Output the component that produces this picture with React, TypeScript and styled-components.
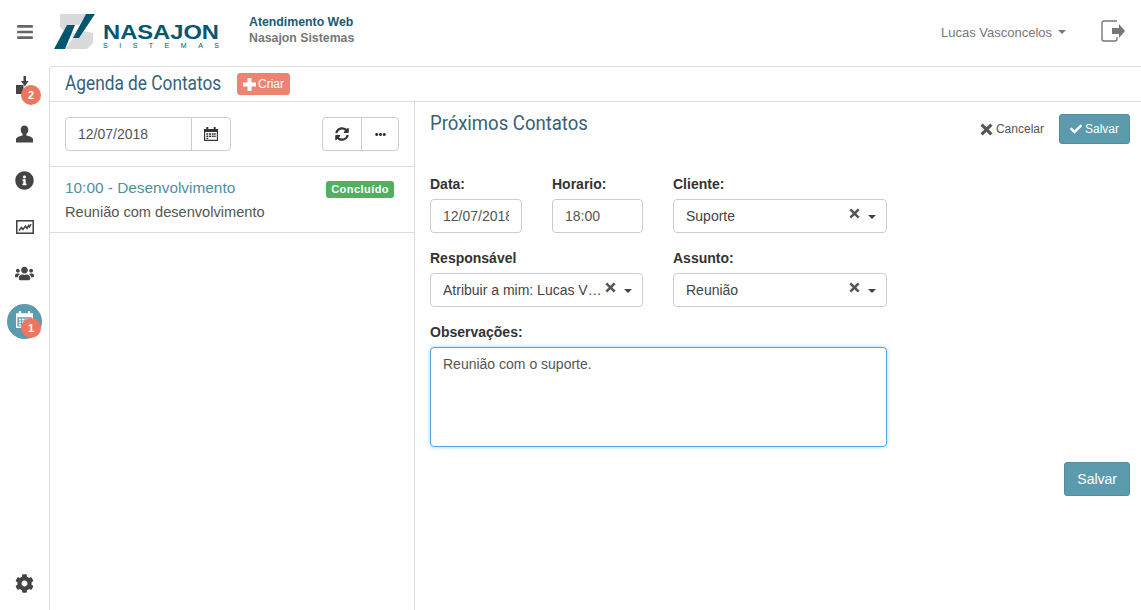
import React from 'react'
import styled, { createGlobalStyle } from 'styled-components'
import { FaBars, FaCheck, FaCog, FaEllipsisH, FaInfoCircle, FaSyncAlt, FaUsers } from 'react-icons/fa'

const GlobalStyle = createGlobalStyle`
  html, body { margin: 0; padding: 0; height: 100%; background: #fff; }
  body { font-family: "Liberation Sans", Arial, sans-serif; font-size: 14px; color: #555; overflow: hidden; }
  * { box-sizing: border-box; }
`

const Page = styled.div`
  width: 1141px;
  height: 610px;
  display: flex;
  flex-direction: column;
`

const TopBar = styled.header`
  height: 66px;
  flex: none;
  display: flex;
  align-items: center;
  padding: 0 15px 0 16px;
`

const MenuButton = styled.div`
  width: 38px;
  display: flex;
  margin-top: -2px;
  color: #666;
  font-size: 18px;
`

const LogoMark = styled.svg`
  flex: none;
  margin-top: -2px;
`

const BrandText = styled.div`
  margin-left: 29px;
  margin-top: -7px;
  font-size: 12.3px;
  font-weight: bold;
  line-height: 16px;
  color: #777;
  strong { display: block; color: #1d5a75; }
`

const UserMenu = styled.div`
  margin-left: auto;
  margin-right: 35px;
  margin-top: -2px;
  display: flex;
  align-items: center;
  gap: 6px;
  font-size: 13px;
  color: #777;
`

const Caret = styled.span<{ $color?: string }>`
  display: block;
  width: 0;
  height: 0;
  flex: none;
  border-top: 4px solid ${p => p.$color ?? '#444'};
  border-left: 4px solid transparent;
  border-right: 4px solid transparent;
`

const LogoutWrap = styled.div`
  display: flex;
  margin-top: -5px;
`

const Body = styled.div`
  flex: 1;
  display: flex;
  min-height: 0;
`

const Sidebar = styled.nav`
  width: 49px;
  flex: none;
  display: flex;
  flex-direction: column;
  gap: 2.4px;
  padding-bottom: 5px;
`

const NavItem = styled.div<{ $active?: boolean; $bottom?: boolean }>`
  position: relative;
  height: 44px;
  flex: none;
  display: flex;
  align-items: center;
  justify-content: center;
  color: #444;
  margin-top: ${p => (p.$bottom ? 'auto' : '0')};
  ${p => p.$active && `
    &::before {
      content: '';
      position: absolute;
      left: 7px;
      top: 6px;
      width: 35px;
      height: 35px;
      border-radius: 50%;
      background: #5b9bad;
    }
    color: #fff;
    svg { position: relative; }
  `}
`

const Badge = styled.span<{ $low?: boolean }>`
  position: absolute;
  left: 21px;
  top: ${p => (p.$low ? 20 : 19)}px;
  width: 20px;
  height: 20px;
  border-radius: 50%;
  background: #ee7560;
  color: #fff;
  font-size: 11px;
  font-weight: bold;
  display: flex;
  align-items: center;
  justify-content: center;
`

const Panel = styled.main`
  flex: 1;
  display: flex;
  flex-direction: column;
  border-top: 1px solid #ddd;
  border-left: 1px solid #ddd;
  border-top-left-radius: 4px;
  min-width: 0;
`

const PanelHeader = styled.div`
  height: 35px;
  flex: none;
  display: flex;
  align-items: center;
  gap: 16px;
  padding: 0 15px;
  border-bottom: 1px solid #ddd;
`

const Title = styled.h1<{ $width: number; $scale: number }>`
  margin: -2px 0 0;
  width: ${p => p.$width}px;
  flex: none;
  white-space: nowrap;
  font: 400 19.5px "Roboto", sans-serif;
  color: #37627a;
  transform: scaleX(${p => p.$scale});
  transform-origin: left;
`

const CreateButton = styled.button`
  height: 22px;
  padding: 0 5px;
  display: flex;
  align-items: center;
  gap: 2px;
  border: 1px solid #ee8271;
  border-radius: 3px;
  background: #ef8373;
  color: #fff;
  font: 12px "Liberation Sans", sans-serif;
`

const Columns = styled.div`
  flex: 1;
  display: flex;
  min-height: 0;
`

const LeftColumn = styled.section`
  width: 365px;
  flex: none;
  border-right: 1px solid #ddd;
`

const DateToolbar = styled.div`
  height: 65px;
  display: flex;
  align-items: center;
  justify-content: space-between;
  padding: 0 15px;
  border-bottom: 1px solid #ddd;
`

const InputGroup = styled.div`
  display: flex;
  height: 34px;
  border: 1px solid #ccc;
  border-radius: 4px;
`

const GroupInput = styled.input`
  width: 126px;
  border: 0;
  border-right: 1px solid #ccc;
  padding: 0 12px;
  font: 14px "Liberation Sans", sans-serif;
  color: #555;
  background: transparent;
  outline: none;
`

const GroupButton = styled.div<{ $width: number; $divider?: boolean }>`
  width: ${p => p.$width}px;
  display: flex;
  align-items: center;
  justify-content: center;
  color: #333;
  font-size: 14px;
  border-right: ${p => (p.$divider ? '1px solid #ccc' : '0')};
`

const ContactItem = styled.article`
  height: 66px;
  padding: 12px 20px 0 15px;
  border-bottom: 1px solid #ddd;
`

const ContactRow = styled.div`
  display: flex;
  justify-content: space-between;
  align-items: center;
  height: 18px;
  font-size: 15.4px;
  color: #4f8fa5;
`

const StatusLabel = styled.span`
  margin-top: 2px;
  padding: 0 5px;
  height: 17px;
  line-height: 17px;
  border-radius: 3px;
  background: #4cb25f;
  color: #fff;
  font-size: 11px;
  font-weight: bold;
  letter-spacing: 0.45px;
`

const ContactText = styled.div`
  margin-top: 6px;
  font-size: 14.6px;
  line-height: 18px;
`

const RightColumn = styled.section`
  flex: 1;
  padding: 12px 11px 0 15px;
  min-width: 0;
`

const FormHeader = styled.div`
  display: flex;
  align-items: flex-start;
  height: 48px;
`

const HeaderSpacer = styled.div`
  flex: 1;
`

const CancelLink = styled.div`
  display: flex;
  align-items: center;
  gap: 3px;
  height: 30px;
  font-size: 12px;
  color: #555;
  margin-right: 15px;
`

const PrimaryButton = styled.button<{ $large?: boolean }>`
  height: ${p => (p.$large ? 34 : 30)}px;
  padding: 0 ${p => (p.$large ? 12 : 10)}px;
  display: flex;
  align-items: center;
  gap: 3px;
  border: 1px solid #4f8c9e;
  border-radius: 3px;
  background: #5b9bad;
  color: #fff;
  font: ${p => (p.$large ? 14 : 12)}px "Liberation Sans", sans-serif;
`

const FormGrid = styled.div`
  width: 457px;
  margin-top: 12px;
  display: grid;
  grid-template-columns: 92px 91px 214px;
  column-gap: 30px;
  row-gap: 15px;
`

const Field = styled.div<{ $span?: number }>`
  grid-column: span ${p => p.$span ?? 1};
  min-width: 0;
`

const Label = styled.label`
  display: block;
  height: 20px;
  margin-bottom: 5px;
  font-weight: bold;
  font-size: 14px;
  line-height: 20px;
  color: #333;
`

const TextInput = styled.input`
  display: block;
  width: 100%;
  height: 34px;
  padding: 0 12px;
  border: 1px solid #ccc;
  border-radius: 4px;
  font: 14px "Liberation Sans", sans-serif;
  color: #555;
  outline: none;
`

const SelectBox = styled.div`
  height: 34px;
  padding: 0 10px 0 12px;
  display: flex;
  align-items: center;
  border: 1px solid #ccc;
  border-radius: 4px;
  color: #444;
`

const SelectValue = styled.span`
  flex: 1;
  min-width: 0;
  white-space: nowrap;
  overflow: hidden;
  text-overflow: ellipsis;
`

const ClearIcon = styled.span`
  display: flex;
  margin: -5px 8px 0 2px;
  color: #555;
`

const SelectCaret = styled(Caret)`
  margin-top: 1px;
`

const NotesArea = styled.textarea`
  display: block;
  width: 100%;
  height: 100px;
  padding: 6px 12px;
  border: 1px solid #52a8dc;
  border-radius: 4px;
  box-shadow: 0 0 4px rgba(82, 168, 220, 0.5);
  font: 14px/20px "Liberation Sans", sans-serif;
  color: #555;
  resize: none;
  outline: none;
`

const FormFooter = styled.div`
  display: flex;
  justify-content: flex-end;
  margin-top: 15px;
`

const Logo = () => (
  <LogoMark width="166" height="36" viewBox="54 14 166 36">
    <polygon points="60,14 86,14 79,25 67,25 66,33 60,27" fill="#d9dadb" />
    <polygon points="66,25 74,25 72,28 71,33 84,33 79,38 74,38 66,33" fill="#d9dadb" opacity="0.7" />
    <polygon points="84,31 93,33 93,43 87,49 65,49 73,38 79,38" fill="#d9dadb" />
    <polygon points="54,49 65,49 75,25 67,25" fill="#02566f" />
    <polygon points="73,38 79,38 95,14 86,14" fill="#02566f" />
    <text x="103" y="39" fontFamily="Liberation Sans" fontWeight="bold" fontSize="20" fill="#02566f" textLength="116" lengthAdjust="spacingAndGlyphs">NASAJON</text>
    <text x="103" y="47.500" fontFamily="Liberation Sans" fontSize="7" fill="#02566f" textLength="116">SISTEMAS</text>
  </LogoMark>
)

const ImportIcon = () => (
  <svg width="18" height="18" viewBox="0 0 18 18" fill="currentColor" style={{ marginTop: -6 }}>
    <path d="M7.500 0h2.500v5h2.500l-3.700 5.500-3.800-5.500h2.500z" />
    <rect x="0" y="9" width="7.500" height="9" />
  </svg>
)

const UserIcon = () => (
  <svg width="17" height="18" viewBox="0 0 18 18" fill="currentColor">
    <path d="M9 0c2.500 0 4 2 4 4.500 0 2-1 3.500-2 4.500v1.500c3 .5 7 2 7 4V18H0v-3.500c0-2 4-3.500 7-4V9C6 8 5 6.500 5 4.500 5 2 6.500 0 9 0z" />
  </svg>
)

const ChartIcon = () => (
  <svg width="18" height="14" viewBox="0 0 18 14" fill="none" stroke="currentColor">
    <rect x="0.750" y="0.750" width="16.500" height="12.500" strokeWidth="1.600" />
    <path d="M3 10.500l2.500-3 1.500 2 2.500-3.500 1.500 2.500 1.500-3 1 1.500 1.500-3" strokeWidth="1.500" />
  </svg>
)

const CalendarIcon = ({ size, cut }: { size: number; cut: string }) => (
  <svg width={size} height={size} viewBox="0 0 18 18">
    <path fill="currentColor" d="M0 2.500h3V0h2.500v2.500h7V0H15v2.500h3V18H0zM1.500 6.500V16.500h15V6.500z" />
    <g fill="currentColor">
      <rect x="3" y="8" width="2.500" height="2" />
      <rect x="6.500" y="8" width="2.500" height="2" />
      <rect x="10" y="8" width="2.500" height="2" />
      <rect x="13" y="8" width="2" height="2" />
      <rect x="3" y="11" width="2.500" height="2" />
      <rect x="6.500" y="11" width="2.500" height="2" />
      <rect x="10" y="11" width="2.500" height="2" />
      <rect x="13" y="11" width="2" height="2" />
      <rect x="3" y="14" width="2.500" height="1.500" fill={cut} />
    </g>
  </svg>
)

const BoldCross = ({ size }: { size: number }) => (
  <svg width={size} height={size} viewBox="0 0 12 12" fill="currentColor">
    <path d="M2.500.5L6 4 9.500.5 11.500 2.500 8 6l3.500 3.500-2 2L6 8l-3.500 3.500-2-2L4 6 .5 2.500z" />
  </svg>
)

const BoldPlus = () => (
  <svg width="13" height="13" viewBox="0 0 13 13" fill="currentColor">
    <path d="M4.500 0h4v4.500H13v4H8.500V13h-4V8.500H0v-4h4.500z" />
  </svg>
)

const LogoutIcon = () => (
  <svg width="25" height="22" viewBox="0 0 25 22" fill="none">
    <path d="M16 1H3a2 2 0 0 0-2 2v16a2 2 0 0 0 2 2h11a2 2 0 0 0 2-2v-2" stroke="#777" strokeWidth="1.400" />
    <path d="M11 8h7V4l6 7-6 7v-4h-7z" fill="#777" />
  </svg>
)

const ClearableSelect = ({ value }: { value: string }) => (
  <SelectBox>
    <SelectValue>{value}</SelectValue>
    <ClearIcon><BoldCross size={11} /></ClearIcon>
    <SelectCaret />
  </SelectBox>
)

export default function App() {
  return (
    <Page>
      <GlobalStyle />
      <TopBar>
        <MenuButton><FaBars /></MenuButton>
        <Logo />
        <BrandText>
          <strong>Atendimento Web</strong>
          Nasajon Sistemas
        </BrandText>
        <UserMenu>Lucas Vasconcelos <Caret $color="#777" /></UserMenu>
        <LogoutWrap><LogoutIcon /></LogoutWrap>
      </TopBar>
      <Body>
        <Sidebar>
          <NavItem><ImportIcon /><Badge>2</Badge></NavItem>
          <NavItem><UserIcon /></NavItem>
          <NavItem><FaInfoCircle size={19} /></NavItem>
          <NavItem><ChartIcon /></NavItem>
          <NavItem><FaUsers size={19} /></NavItem>
          <NavItem $active><CalendarIcon size={17} cut="#fff" /><Badge $low>1</Badge></NavItem>
          <NavItem $bottom><FaCog size={19} /></NavItem>
        </Sidebar>
        <Panel>
          <PanelHeader>
            <Title $width={156} $scale={0.886}>Agenda de Contatos</Title>
            <CreateButton><BoldPlus />Criar</CreateButton>
          </PanelHeader>
          <Columns>
            <LeftColumn>
              <DateToolbar>
                <InputGroup>
                  <GroupInput defaultValue="12/07/2018" />
                  <GroupButton $width={38}><CalendarIcon size={14} cut="#333" /></GroupButton>
                </InputGroup>
                <InputGroup>
                  <GroupButton $width={39} $divider><FaSyncAlt /></GroupButton>
                  <GroupButton $width={36}><FaEllipsisH size={11} /></GroupButton>
                </InputGroup>
              </DateToolbar>
              <ContactItem>
                <ContactRow>
                  10:00 - Desenvolvimento
                  <StatusLabel>Concluído</StatusLabel>
                </ContactRow>
                <ContactText>Reunião com desenvolvimento</ContactText>
              </ContactItem>
            </LeftColumn>
            <RightColumn>
              <FormHeader>
                <Title as="h2" $width={158} $scale={0.95}>Próximos Contatos</Title>
                <HeaderSpacer />
                <CancelLink><BoldCross size={13} />Cancelar</CancelLink>
                <PrimaryButton><FaCheck size={12} />Salvar</PrimaryButton>
              </FormHeader>
              <FormGrid>
                <Field>
                  <Label>Data:</Label>
                  <TextInput defaultValue="12/07/2018" />
                </Field>
                <Field>
                  <Label>Horario:</Label>
                  <TextInput defaultValue="18:00" />
                </Field>
                <Field>
                  <Label>Cliente:</Label>
                  <ClearableSelect value="Suporte" />
                </Field>
                <Field $span={2}>
                  <Label>Responsável</Label>
                  <ClearableSelect value="Atribuir a mim: Lucas V…" />
                </Field>
                <Field>
                  <Label>Assunto:</Label>
                  <ClearableSelect value="Reunião" />
                </Field>
                <Field $span={3}>
                  <Label>Observações:</Label>
                  <NotesArea defaultValue="Reunião com o suporte." />
                </Field>
              </FormGrid>
              <FormFooter>
                <PrimaryButton $large>Salvar</PrimaryButton>
              </FormFooter>
            </RightColumn>
          </Columns>
        </Panel>
      </Body>
    </Page>
  )
}
